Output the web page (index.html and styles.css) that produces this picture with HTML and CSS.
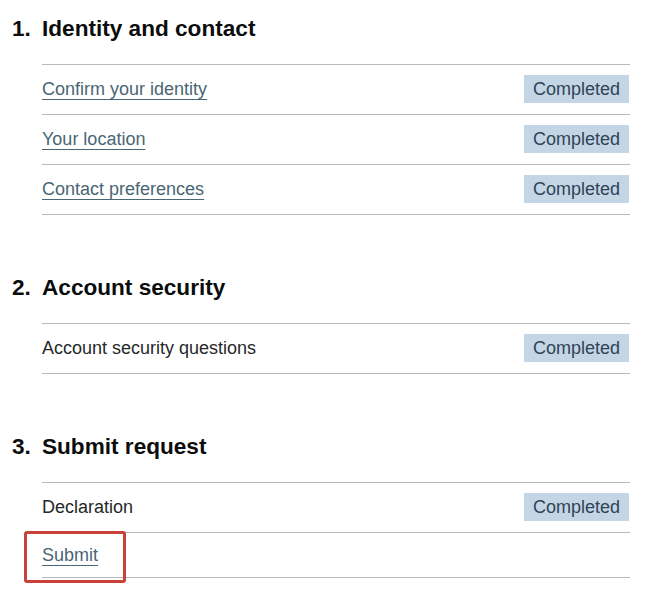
FILE: index.html
```html
<!DOCTYPE html>
<html lang="en">
<head>
<meta charset="utf-8">
<title>Task list</title>
<link rel="stylesheet" href="styles.css">
</head>
<body>
<main class="page">
  <section class="section">
    <h2 class="heading"><span class="num">1.</span><span>Identity and contact</span></h2>
    <ul class="tasks">
      <li class="task"><a class="link" href="#">Confirm your identity</a><strong class="tag">Completed</strong></li>
      <li class="task"><a class="link" href="#">Your location</a><strong class="tag">Completed</strong></li>
      <li class="task"><a class="link" href="#">Contact preferences</a><strong class="tag">Completed</strong></li>
    </ul>
  </section>
  <section class="section">
    <h2 class="heading"><span class="num">2.</span><span>Account security</span></h2>
    <ul class="tasks">
      <li class="task"><span class="label">Account security questions</span><strong class="tag">Completed</strong></li>
    </ul>
  </section>
  <section class="section">
    <h2 class="heading"><span class="num">3.</span><span>Submit request</span></h2>
    <ul class="tasks">
      <li class="task"><span class="label">Declaration</span><strong class="tag">Completed</strong></li>
      <li class="task task-plain"><a class="link" href="#">Submit</a><span class="highlight" aria-hidden="true"></span></li>
    </ul>
  </section>
</main>
</body>
</html>
```

FILE: styles.css
```css
* { box-sizing: border-box; }

html, body {
  margin: 0;
  padding: 0;
  background: #ffffff;
}

body {
  font-family: "Liberation Sans", Arial, sans-serif;
  color: #1f2224;
}

.page {
  padding: 14px 20px 12px 12px;
}

.section {
  margin-bottom: 58px;
}

.section:last-child {
  margin-bottom: 0;
}

.heading {
  display: flex;
  margin: 0 0 20px 0;
  font-size: 22.6px;
  line-height: 30px;
  font-weight: 700;
  color: #0b0c0c;
}

.num {
  width: 30px;
  flex: none;
}

.tasks {
  list-style: none;
  margin: 0 0 0 30px;
  padding: 0;
  border-bottom: 1px solid #b8babc;
}

.task {
  position: relative;
  display: flex;
  align-items: center;
  justify-content: space-between;
  min-height: 50px;
  padding: 10px 0 11px 0;
  border-top: 1px solid #b8babc;
  font-size: 18px;
  line-height: 24px;
}

.task-plain {
  min-height: 45px;
  padding: 10px 0 10px 0;
}

.link {
  color: #4a6674;
  text-decoration: underline;
  text-decoration-thickness: 1px;
  text-underline-offset: 4px;
}

.label {
  color: #262829;
}

.tag {
  display: inline-block;
  margin-right: 1px;
  padding: 2px 9px;
  font-weight: 400;
  font-size: 18px;
  line-height: 24px;
  background: #c4d6e6;
  color: #2f4456;
}

.highlight {
  position: absolute;
  left: -18px;
  top: -2px;
  width: 102px;
  height: 52px;
  border: 3px solid #c9423a;
  border-radius: 3px;
  pointer-events: none;
}
```
